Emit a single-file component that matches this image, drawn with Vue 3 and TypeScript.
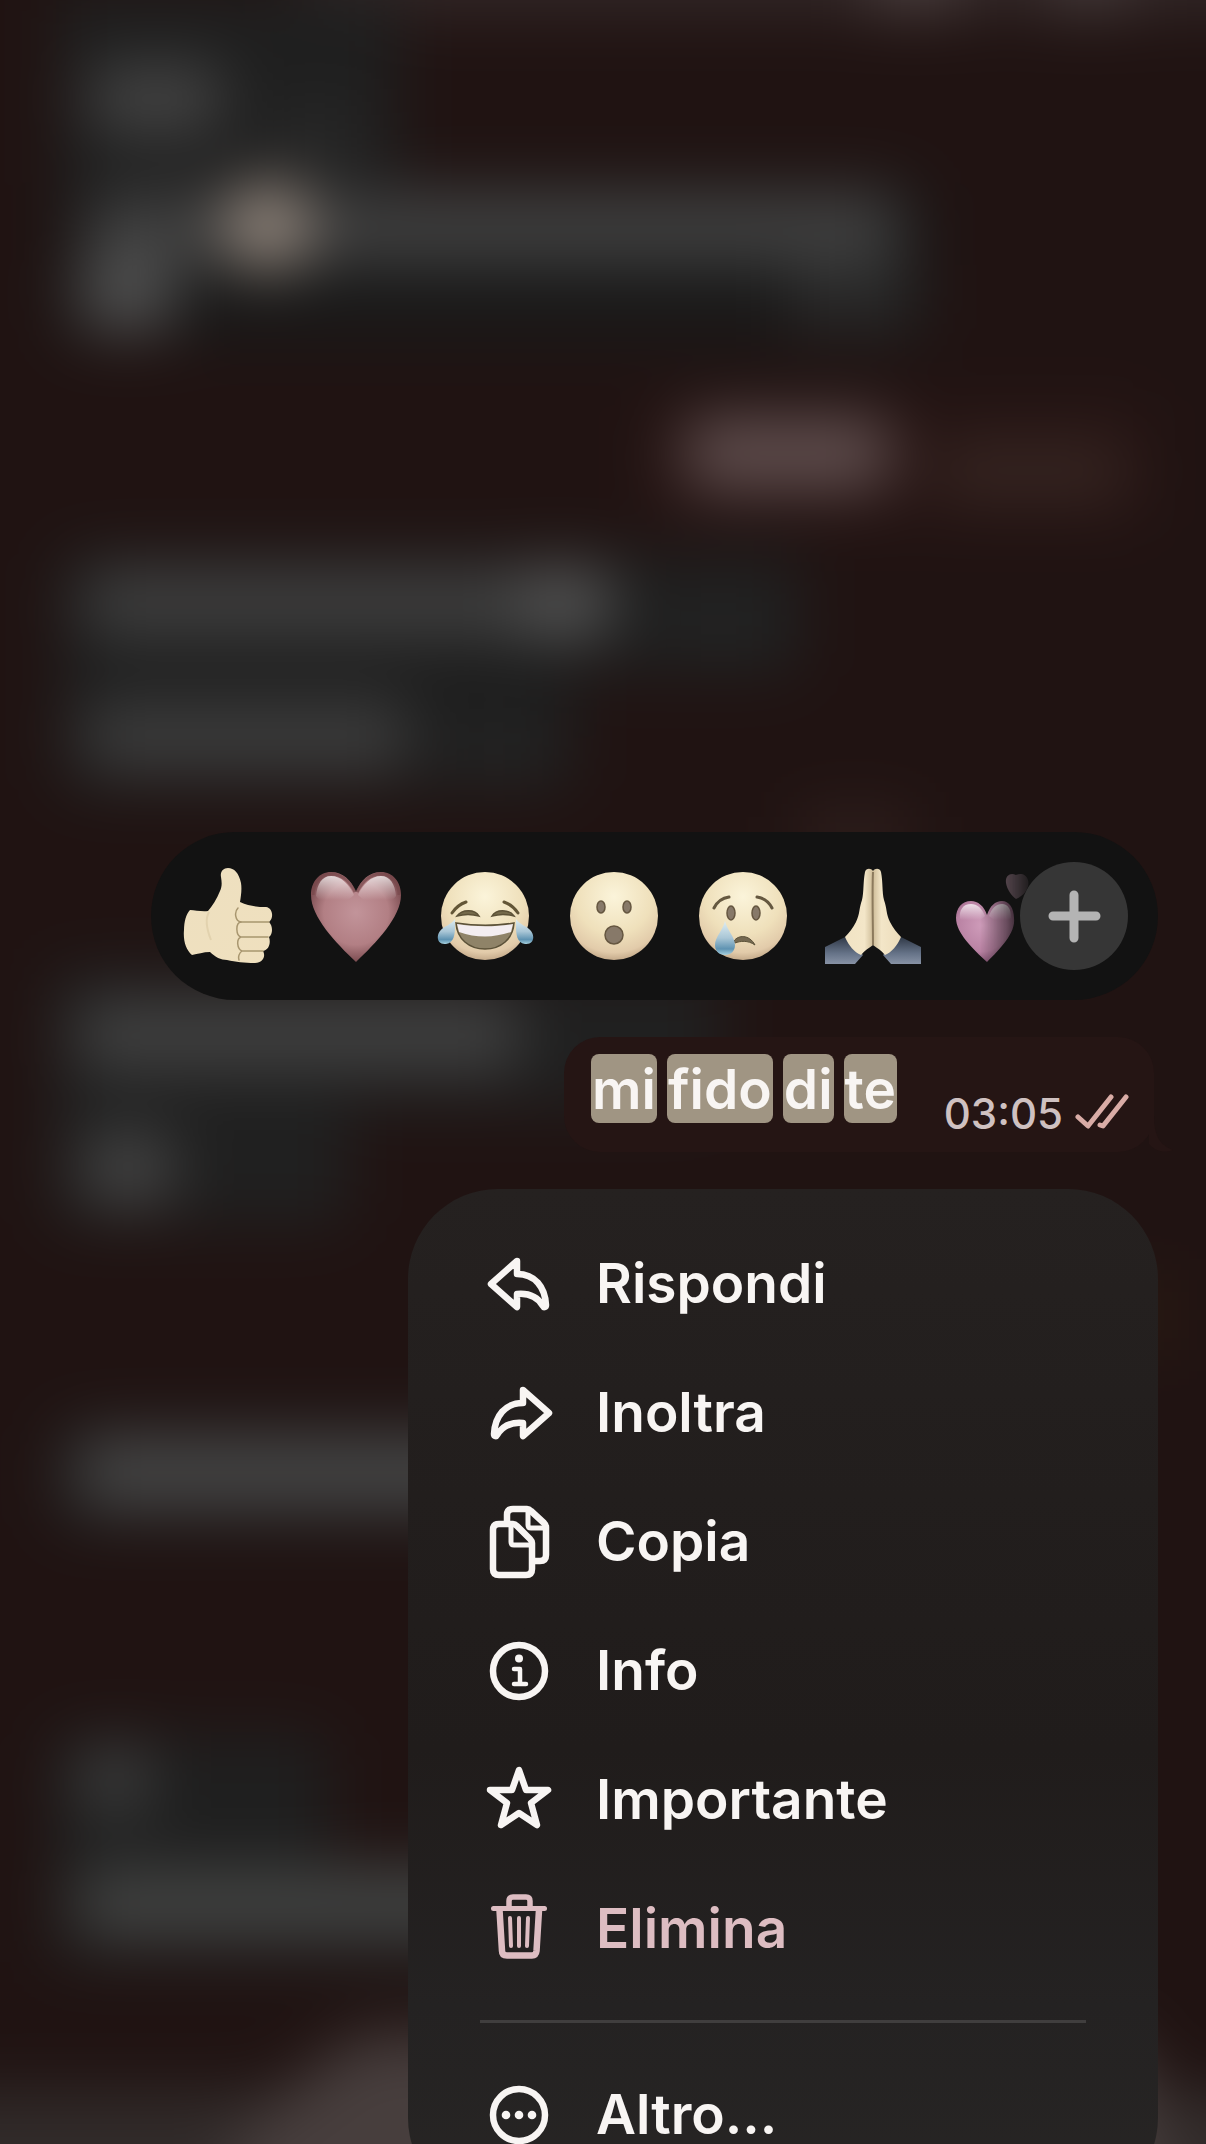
<script setup lang="ts">
type Action = { id: string; label: string; danger?: boolean }

const actions: Action[] = [
  { id: 'reply', label: 'Rispondi' },
  { id: 'forward', label: 'Inoltra' },
  { id: 'copy', label: 'Copia' },
  { id: 'info', label: 'Info' },
  { id: 'star', label: 'Importante' },
  { id: 'trash', label: 'Elimina', danger: true },
]

const reactions = [
  { id: 'thumb', name: 'Mi piace' },
  { id: 'heart', name: 'Cuore' },
  { id: 'joy', name: 'Risata' },
  { id: 'wow', name: 'Sorpresa' },
  { id: 'cry', name: 'Tristezza' },
  { id: 'pray', name: 'Mani giunte' },
  { id: 'hearts', name: 'Due cuori' },
]

const words = ['mi', 'fido', 'di', 'te']
</script>

<template>
  <main class="screen">
    <svg class="backdrop" viewBox="0 0 1206 2144" preserveAspectRatio="xMidYMid slice" aria-hidden="true">
      <defs>
        <filter id="soft" x="-200" y="-200" width="1606" height="2544" filterUnits="userSpaceOnUse" color-interpolation-filters="sRGB">
          <feGaussianBlur stdDeviation="31" />
        </filter>
      </defs>
      <rect width="1206" height="2144" fill="#201312" />
      <g filter="url(#soft)">
        <rect x="-200" y="-200" width="1606" height="2544" fill="#201312" />
        <rect x="300" y="-180" width="1100" height="194" fill="#322727" />
        <rect x="870" y="-160" width="90" height="170" fill="#4c4141" />
        <rect x="1050" y="-160" width="80" height="170" fill="#463c3c" />

        <rect x="56" y="-10" width="344" height="195" fill="#1f1f1f" />
        <rect x="90" y="66" width="132" height="66" rx="20" fill="#454545" />
        <rect x="270" y="110" width="90" height="50" fill="#292929" />

        <rect x="56" y="182" width="874" height="160" rx="20" fill="#191919" />
        <rect x="88" y="192" width="810" height="72" rx="16" fill="#404040" />
        <rect x="80" y="258" width="94" height="72" rx="16" fill="#515151" />
        <ellipse cx="268" cy="226" rx="44" ry="44" fill="#95897f" />
        <rect x="790" y="264" width="120" height="64" fill="#292929" />

        <rect x="640" y="398" width="514" height="132" rx="20" fill="#261514" />
        <rect x="684" y="418" width="208" height="70" rx="24" fill="#625050" />
        <rect x="935" y="446" width="190" height="50" rx="20" fill="#382723" />

        <rect x="56" y="552" width="748" height="126" rx="20" fill="#1e1e1e" />
        <rect x="84" y="570" width="534" height="66" rx="16" fill="#404040" />
        <rect x="520" y="568" width="84" height="70" rx="20" fill="#545454" />
        <rect x="660" y="598" width="120" height="50" fill="#242424" />

        <rect x="56" y="670" width="520" height="122" rx="20" fill="#1e1e1e" />
        <rect x="84" y="702" width="324" height="68" rx="16" fill="#3d3d3d" />
        <rect x="440" y="730" width="110" height="44" fill="#252525" />
        <rect x="800" y="812" width="110" height="50" fill="#30201e" />

        <rect x="50" y="970" width="670" height="140" fill="#202020" />
        <rect x="78" y="1002" width="442" height="66" rx="16" fill="#434343" />
        <rect x="50" y="1100" width="300" height="126" rx="20" fill="#202020" />
        <rect x="84" y="1134" width="88" height="68" rx="18" fill="#464646" />

        <rect x="50" y="1422" width="700" height="108" rx="20" fill="#1f1d1d" />
        <rect x="78" y="1438" width="500" height="68" rx="16" fill="#474747" />

        <rect x="50" y="1732" width="280" height="230" rx="20" fill="#1f1f1f" />
        <rect x="80" y="1750" width="70" height="60" rx="16" fill="#3f3f3f" />
        <rect x="50" y="1860" width="600" height="102" fill="#202020" />
        <rect x="78" y="1870" width="500" height="66" rx="16" fill="#434443" />

        <rect x="-200" y="2092" width="1606" height="260" fill="#312b2a" />
        <path d="M230 2400V2150Q310 2060 370 2034H1120Q1180 2070 1180 2400Z" fill="#473e3d" />
        <rect x="1130" y="1280" width="40" height="70" fill="#2e1d13" />
      </g>
    </svg>

    <section class="overlay" aria-label="Opzioni messaggio">
      <div class="reactions">
        <div class="reaction-list">
          <button v-for="r in reactions" :key="r.id" type="button" class="reaction" :aria-label="r.name">
            <svg viewBox="0 0 96 96" aria-hidden="true">
              <defs>
                <radialGradient :id="'face-' + r.id" cx="50%" cy="28%" r="72%">
                  <stop offset="0" stop-color="#fbf4da" />
                  <stop offset="0.6" stop-color="#efe0bb" />
                  <stop offset="0.88" stop-color="#e2cbaa" />
                  <stop offset="1" stop-color="#c5ab8b" />
                </radialGradient>
                <linearGradient :id="'drop-' + r.id" x1="0" y1="0" x2="0" y2="1">
                  <stop offset="0" stop-color="#e0eef2" />
                  <stop offset="0.5" stop-color="#a9c6d6" />
                  <stop offset="0.82" stop-color="#5f93b2" />
                  <stop offset="1" stop-color="#a5d0de" />
                </linearGradient>
                <linearGradient :id="'skin-' + r.id" x1="0" y1="0" x2="1" y2="1">
                  <stop offset="0" stop-color="#eee0c0" />
                  <stop offset="1" stop-color="#efe0be" />
                </linearGradient>
                <linearGradient :id="'palm-' + r.id" x1="0" y1="0" x2="1" y2="0">
                  <stop offset="0" stop-color="#f1e3c4" />
                  <stop offset="0.35" stop-color="#f3e6c8" />
                  <stop offset="0.5" stop-color="#cfbd99" />
                  <stop offset="0.65" stop-color="#f3e6c8" />
                  <stop offset="1" stop-color="#ecdcba" />
                </linearGradient>
                <radialGradient :id="'rose-' + r.id" cx="50%" cy="45%" r="60%">
                  <stop offset="0" stop-color="#c2949a" />
                  <stop offset="0.6" stop-color="#b27f84" />
                  <stop offset="1" stop-color="#6d3f43" />
                </radialGradient>
                <radialGradient :id="'pink-' + r.id" cx="45%" cy="40%" r="66%">
                  <stop offset="0" stop-color="#cf9cba" />
                  <stop offset="0.65" stop-color="#b982a3" />
                  <stop offset="1" stop-color="#7d4d6c" />
                </radialGradient>
                <linearGradient :id="'shine-' + r.id" x1="0" y1="0" x2="0" y2="1">
                  <stop offset="0" stop-color="#fff" stop-opacity="0.75" />
                  <stop offset="0.85" stop-color="#fff" stop-opacity="0" />
                </linearGradient>
                <linearGradient :id="'cuff-' + r.id" x1="0" y1="0" x2="0" y2="1">
                  <stop offset="0" stop-color="#2f3846" />
                  <stop offset="0.6" stop-color="#657287" />
                  <stop offset="1" stop-color="#8792a5" />
                </linearGradient>
              </defs>

              <template v-if="r.id === 'thumb'">
                <path :fill="`url(#skin-${r.id})`" d="M48 0C43 0 40 4 41 9C42 15 42 19 40 23C37 31 32 38 28 43C22 44 15 42 10 42C6 46 4 54 4 62C3 73 6 82 12 87C18 86 23 84 30 84C35 89 41 92 47 92C56 94 64 95 75 95C83 95 86 88 83 83C89 82 91 75 89 69C93 66 93 58 89 54C94 50 93 40 86 39C77 39 69 38 60 34C61 28 62 21 61 15C59 5 54 0 48 0Z" />
                <g fill="none" stroke="#a8966f" stroke-width="1.5" stroke-linecap="round">
                  <path d="M89 54H61C55 53 54 44 58 40" />
                  <path d="M61 54C55 55 56 68 61 69H88M61 69C56 71 57 81 62 83H83M62 83C59 85 58 89 59 92" />
                </g>
                <path d="M29 44C25 51 27 62 31 72" fill="none" stroke="#e2d2ae" stroke-width="2" />
              </template>

              <template v-else-if="r.id === 'heart'">
                <path :fill="`url(#rose-${r.id})`" d="M47 24C42 12 34 4 22 4C10 4 2 14 2 27C2 49 27 75 47 94C67 75 92 49 92 27C92 14 84 4 72 4C60 4 52 12 47 24Z" />
                <path d="M46 24C40 12 32 6 22 6C12 6 4 14 4 27M48 24C54 12 62 6 72 6C82 6 90 14 90 27" fill="none" stroke="#77484c" stroke-width="3" opacity="0.7" />
                <path :fill="`url(#shine-${r.id})`" d="M7 28C8 16 13 8 22 8C32 8 40 16 45 27C34 38 16 40 7 28ZM49 27C54 16 62 8 72 8C81 8 86 16 87 28C78 40 60 38 49 27Z" />
              </template>

              <template v-else-if="r.id === 'joy'">
                <circle cx="47" cy="48" r="44" :fill="`url(#face-${r.id})`" />
                <g fill="none" stroke="#635637" stroke-width="3" stroke-linecap="round">
                  <path d="M14 45C18 39 22 36 28 34M66 34C72 36 76 39 80 45" />
                </g>
                <path d="M19 48C24 41 37 41 41 48C34 46 26 46 19 48ZM54 48C58 41 71 41 76 48C69 46 61 46 54 48Z" fill="#756a4b" stroke="#5d5237" stroke-width="1.5" />
                <path d="M18 55C37 58 58 58 76 55C75 71 63 81 47 81C31 81 19 71 18 55Z" fill="#8f8368" stroke="#5b5138" stroke-width="1.5" />
                <path d="M19 56C37 59 58 59 75 56L73 64C56 70 38 70 21 64Z" fill="#f3edf0" />
                <path :fill="`url(#drop-${r.id})`" d="M17 51C17 62 18 75 8 76C-1 77-2 68 2 63C6 58 13 57 17 51ZM78 51C78 62 77 75 87 76C96 77 97 68 93 63C89 58 82 57 78 51Z" />
              </template>

              <template v-else-if="r.id === 'wow'">
                <circle cx="47" cy="48" r="44" :fill="`url(#face-${r.id})`" />
                <g fill="#877969" stroke="#655640" stroke-width="1.5">
                  <ellipse cx="34" cy="39" rx="4" ry="6" />
                  <ellipse cx="60" cy="39" rx="4" ry="6" />
                  <circle cx="47" cy="67" r="9" />
                </g>
              </template>

              <template v-else-if="r.id === 'cry'">
                <circle cx="47" cy="48" r="44" :fill="`url(#face-${r.id})`" />
                <g fill="none" stroke="#655840" stroke-width="3" stroke-linecap="round">
                  <path d="M18 40C21 34 26 30 33 29M61 29C68 30 73 34 76 40" />
                </g>
                <g fill="#877969" stroke="#655640" stroke-width="1.5">
                  <ellipse cx="35" cy="45" rx="4" ry="7" />
                  <ellipse cx="60" cy="45" rx="4" ry="7" />
                </g>
                <path d="M38 73C42 67 53 66 59 77C52 72 44 73 39 75Z" fill="#756951" stroke="#5b5138" stroke-width="1" />
                <path :fill="`url(#drop-${r.id})`" d="M29 53C31 62 39 69 39 77C39 83 35 87 29 87C23 87 19 83 19 77C19 69 27 62 29 53Z" />
              </template>

              <template v-else-if="r.id === 'pray'">
                <path :fill="`url(#cuff-${r.id})`" d="M0 79L20 69L38 87L30 96H0ZM96 79L76 69L58 87L66 96H96Z" />
                <path :fill="`url(#palm-${r.id})`" d="M48 3C46 0 41 0 40 4C38 14 39 24 37 32C34 40 35 46 31 54C28 60 24 65 20 69C24 78 29 84 36 87C40 82 44 80 48 77C52 80 56 82 60 87C67 84 72 78 76 69C72 65 68 60 65 54C61 46 62 40 59 32C57 24 58 14 56 4C55 0 50 0 48 3Z" />
                <path d="M48 4C47 25 48 55 48 77" fill="none" stroke="#8c7a5d" stroke-width="2" />
              </template>

              <template v-else>
                <path :fill="`url(#pink-${r.id})`" d="M33 47C30 38 24 33 17 33C8 33 2 40 2 50C2 65 19 81 33 94C46 81 62 65 60 50C60 40 55 33 48 33C41 33 36 38 33 47Z" />
                <path :fill="`url(#shine-${r.id})`" d="M6 51C5 42 9 36 17 36C23 36 28 40 31 48C24 56 12 57 6 51ZM35 48C38 40 42 36 48 36C54 36 57 41 57 50C49 56 41 54 35 48Z" />
                <path fill="#8a6f7c" d="M62 7C56 4 51 8 52 15C53 22 58 28 62 31C71 27 76 19 74 12C72 6 67 5 62 7Z" />
              </template>
            </svg>
          </button>
        </div>
        <button type="button" class="more-reactions" aria-label="Altre reazioni">
          <svg viewBox="0 0 108 108" aria-hidden="true">
            <path d="M54 33V76M33 54H76" stroke="#b4b4b4" stroke-width="9" stroke-linecap="round" />
          </svg>
        </button>
      </div>

      <article class="bubble">
        <p class="message">
          <span v-for="w in words" :key="w" class="word">{{ w }}</span>
        </p>
        <span class="meta">
          <time datetime="03:05">03:05</time>
          <svg class="ticks" viewBox="0 0 54 36" aria-label="Letto" role="img">
            <path d="M3 23L13 32L36 3M25 31L28 32L51 3" fill="none" stroke="#d9aca6" stroke-width="5" stroke-linecap="round" stroke-linejoin="round" />
          </svg>
        </span>
        <svg class="tail" viewBox="0 0 24 36" aria-hidden="true">
          <path d="M0 0H5C5 18 10 29 24 34C14 38 5 34 0 28Z" fill="#251514" />
        </svg>
      </article>

      <nav class="menu">
        <button v-for="a in actions" :key="a.id" type="button" class="item" :class="{ danger: a.danger }">
          <svg class="icon" viewBox="0 0 72 72" aria-hidden="true">
            <path v-if="a.id === 'reply'" d="M34 14L8 37L34 60V47C45 46 54 49 60 59C61 61 63 60 63 58C62 40 52 27 34 27Z" />
            <path v-else-if="a.id === 'forward'" d="M40 14L66 37L40 60V47C29 46 20 49 14 59C13 61 11 60 11 58C12 40 22 27 40 27Z" />
            <g v-else-if="a.id === 'copy'">
              <path d="M30 19H16Q10 19 10 25V64Q10 70 16 70H43Q49 70 49 64V38Q49 36 47 34L34 21Q32 19 30 19Z" />
              <path d="M28 20V37Q28 40 31 40H48" stroke-width="5" />
              <path d="M24 18V10Q24 4 30 4H44Q46 4 48 6L61 18Q63 20 63 22V50Q63 56 57 56H51" />
              <path d="M45 5V20Q45 23 48 23H62" stroke-width="5" />
            </g>
            <g v-else-if="a.id === 'info'">
              <circle cx="36" cy="37" r="26" />
              <path d="M31 35H37V50M31 50H43" stroke-width="4.5" />
              <circle cx="36" cy="24.500" r="4" class="solid" />
            </g>
            <path v-else-if="a.id === 'star'" d="M36 7L29 27H7L24 40L18 62L36 50L54 62L48 40L65 27H43Z" />
            <g v-else>
              <path d="M10.500 16.500H61.500" stroke-width="5" />
              <path d="M26 16V9Q26 5 30 5H43Q47 5 47 9V16" stroke-width="5.500" />
              <path d="M16.500 18L19 59Q19 63.500 24 63.500H49Q53 63.500 53.500 59L56 18" />
              <path d="M27 26L28 54M36 26V54M45 26L44 54" stroke-width="4" />
            </g>
          </svg>
          <span>{{ a.label }}</span>
        </button>
        <hr class="divider" />
        <button type="button" class="item">
          <svg class="icon" viewBox="0 0 72 72" aria-hidden="true">
            <circle cx="36" cy="37" r="26" />
            <g class="solid">
              <circle cx="23" cy="37" r="4.300" />
              <circle cx="36" cy="37" r="4.300" />
              <circle cx="49" cy="37" r="4.300" />
            </g>
          </svg>
          <span>Altro...</span>
        </button>
      </nav>
    </section>
  </main>
</template>

<style>
body {
  margin: 0;
  background: #201312;
}
</style>

<style scoped>
.screen {
  position: relative;
  height: 100vh;
  overflow: hidden;
  font-family: Inter, "Liberation Sans", sans-serif;
  color: #f8f5f3;
}

.backdrop {
  position: absolute;
  inset: 0;
  width: 100%;
  height: 100%;
}

.overlay {
  position: relative;
  display: flex;
  flex-direction: column;
  align-items: flex-end;
  padding: 832px 48px 0;
}

button {
  border: 0;
  margin: 0;
  padding: 0;
  background: none;
  color: inherit;
  font: inherit;
}

.reactions {
  display: flex;
  align-items: center;
  box-sizing: border-box;
  width: 1007px;
  max-width: 100%;
  height: 168px;
  padding: 0 30px 0 29px;
  border-radius: 84px;
  background: #121212;
}

.reaction-list {
  display: flex;
  flex: 1;
  min-width: 0;
  gap: 33px;
  overflow: hidden;
  margin-right: -16px;
  mask-image: linear-gradient(to right, #000 calc(100% - 56px), transparent);
}

.reaction {
  flex: none;
  width: 96px;
  height: 96px;
}

.reaction svg,
.more-reactions svg {
  display: block;
  overflow: visible;
}

.more-reactions {
  position: relative;
  flex: none;
  width: 108px;
  height: 108px;
  border-radius: 50%;
  background: #363636;
}

.bubble {
  position: relative;
  display: flex;
  justify-content: space-between;
  box-sizing: border-box;
  width: 590px;
  height: 115px;
  margin: 37px 4px 0 0;
  padding: 17px 25px 0 27px;
  border-radius: 36px;
  background: #251514;
}

.message {
  display: flex;
  gap: 10px;
  margin: 0;
  font-size: 55px;
  font-weight: 600;
  line-height: 70px;
}

.word {
  height: 69px;
  padding: 0 1px;
  border-radius: 8px;
  background: #a09583;
}

.meta {
  display: flex;
  align-items: flex-start;
  gap: 12px;
  padding-top: 38px;
  font-size: 42px;
  line-height: 44px;
  font-weight: 500;
  color: #cfc1c1;
}

.ticks {
  width: 54px;
  height: 36px;
  margin-top: 2px;
}

.tail {
  position: absolute;
  right: -19px;
  bottom: 0;
  width: 24px;
  height: 36px;
}

.menu {
  display: flex;
  flex-direction: column;
  box-sizing: border-box;
  width: 750px;
  max-width: 100%;
  margin-top: 37px;
  padding: 29px 0 30px;
  border-radius: 90px;
  background: linear-gradient(#252120, #221e1d 30%, #201c1b 55%, #242222 80%, #272524);
}

.item {
  display: flex;
  align-items: center;
  gap: 41px;
  height: 129px;
  padding: 0 72px 0 75px;
  font-size: 55px;
  font-weight: 600;
  line-height: 56px;
  text-align: left;
}

.danger {
  color: #ddbdc2;
}

.icon {
  flex: none;
  width: 72px;
  height: 72px;
  overflow: visible;
  fill: none;
  stroke: currentColor;
  stroke-width: 6.5;
  stroke-linecap: round;
  stroke-linejoin: round;
}

.solid {
  fill: currentColor;
  stroke: none;
}

.divider {
  width: auto;
  height: 3px;
  margin: 28px 72px 26px;
  border: 0;
  background: #403e3e;
}
</style>
